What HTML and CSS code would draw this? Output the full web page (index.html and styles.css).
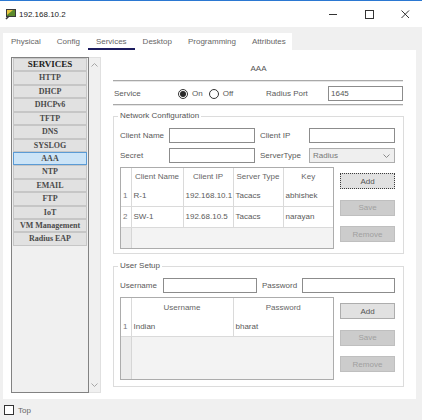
FILE: index.html
```html
<!DOCTYPE html>
<html>
   <head>
      <title>192.168.10.2</title>
      <meta name="viewport" content="width=device-width, initial-scale=1">
      <link rel="stylesheet" href="styles.css">
   </head>
   <body>
      <div class="titlebar">
         <svg class="app-icon" viewBox="0 0 12 12">
            <rect x="1.5" y="1.5" width="9" height="7" fill="#5c8a2c" stroke="#3a3a3a"/>
            <path d="M2 2h6l-6 5z" fill="#e9c640"/>
            <path d="M1 11l3-3" stroke="#3a3a3a" stroke-width="1.6"/>
         </svg>
         <span class="title">192.168.10.2</span>
         <div class="win-controls">
            <svg viewBox="0 0 10 10"><path d="M1 5.5h8" stroke="#333" stroke-width="1"/></svg>
            <svg viewBox="0 0 10 10"><rect x="1.5" y="1.5" width="8" height="8" fill="none" stroke="#333"/></svg>
            <svg viewBox="0 0 10 10"><path d="M1.5 1.5l7.5 7.5M9 1.5l-7.5 7.5" stroke="#333" stroke-width="1"/></svg>
         </div>
      </div>

      <div class="window-body">
         <div class="tabs">
            <span class="tab">Physical</span>
            <span class="tab">Config</span>
            <span class="tab active">Services</span>
            <span class="tab">Desktop</span>
            <span class="tab">Programming</span>
            <span class="tab">Attributes</span>
         </div>

         <div class="panel">
            <div class="side">
               <div class="service-list">
                  <div class="svc head">SERVICES</div>
                  <div class="svc">HTTP</div>
                  <div class="svc">DHCP</div>
                  <div class="svc">DHCPv6</div>
                  <div class="svc">TFTP</div>
                  <div class="svc">DNS</div>
                  <div class="svc">SYSLOG</div>
                  <div class="svc selected">AAA</div>
                  <div class="svc">NTP</div>
                  <div class="svc">EMAIL</div>
                  <div class="svc">FTP</div>
                  <div class="svc">IoT</div>
                  <div class="svc">VM Management</div>
                  <div class="svc">Radius EAP</div>
               </div>
               <div class="scrollbar">
                  <svg viewBox="0 0 7 4"><polyline points="0.5,3.5 3.5,0.5 6.5,3.5" fill="none" stroke="#a6a6a6"/></svg>
                  <svg viewBox="0 0 7 4"><polyline points="0.5,0.5 3.5,3.5 6.5,0.5" fill="none" stroke="#a6a6a6"/></svg>
               </div>
            </div>

            <div class="content">
               <div class="page-title">AAA</div>
               <div class="rule"></div>

               <div class="service-row">
                  <span class="row-label">Service</span>
                  <div class="radios">
                     <span class="radio on"></span><span class="radio-text">On</span>
                     <span class="radio"></span><span class="radio-text">Off</span>
                  </div>
                  <span class="port-label">Radius Port</span>
                  <div class="text-input port">1645</div>
               </div>
               <div class="rule second"></div>

               <fieldset class="group">
                  <legend>Network Configuration</legend>
                  <div class="form-grid net-grid">
                     <span>Client Name</span>
                     <div class="text-input"></div>
                     <span class="pad-label">Client IP</span>
                     <div class="text-input"></div>
                     <span>Secret</span>
                     <div class="text-input"></div>
                     <span class="pad-label">ServerType</span>
                     <div class="select">
                        <span>Radius</span>
                        <svg viewBox="0 0 7 4"><polyline points="0.5,0.5 3.5,3.5 6.5,0.5" fill="none" stroke="#8a8a8a"/></svg>
                     </div>
                  </div>

                  <div class="table-row">
                     <div class="grid-box net-table">
                        <table>
                           <colgroup>
                              <col style="width: 10px">
                              <col style="width: 52px">
                              <col style="width: 50px">
                              <col style="width: 50px">
                              <col>
                           </colgroup>
                           <tr class="head-row">
                              <th></th><th>Client Name</th><th>Client IP</th><th>Server Type</th><th>Key</th>
                           </tr>
                           <tr>
                              <td class="num">1</td><td>R-1</td><td>192.168.10.1</td><td>Tacacs</td><td>abhishek</td>
                           </tr>
                           <tr>
                              <td class="num">2</td><td>SW-1</td><td>192.68.10.5</td><td>Tacacs</td><td>narayan</td>
                           </tr>
                        </table>
                     </div>
                     <div class="btns">
                        <button class="btn focus">Add</button>
                        <button class="btn" disabled>Save</button>
                        <button class="btn" disabled>Remove</button>
                     </div>
                  </div>
               </fieldset>

               <fieldset class="group user-group">
                  <legend>User Setup</legend>
                  <div class="form-grid user-grid">
                     <span>Username</span>
                     <div class="text-input"></div>
                     <span class="pad-label">Password</span>
                     <div class="text-input"></div>
                  </div>

                  <div class="table-row">
                     <div class="grid-box user-table">
                        <table>
                           <colgroup>
                              <col style="width: 10px">
                              <col style="width: 102px">
                              <col>
                           </colgroup>
                           <tr class="head-row">
                              <th></th><th>Username</th><th>Password</th>
                           </tr>
                           <tr>
                              <td class="num">1</td><td>Indian</td><td>bharat</td>
                           </tr>
                        </table>
                     </div>
                     <div class="btns">
                        <button class="btn">Add</button>
                        <button class="btn" disabled>Save</button>
                        <button class="btn" disabled>Remove</button>
                     </div>
                  </div>
               </fieldset>
            </div>
         </div>
      </div>

      <div class="statusbar">
         <span class="check"></span>
         <span>Top</span>
      </div>
   </body>
</html>
```

FILE: styles.css
```css
* {
   box-sizing: border-box;
}

html, body {
   margin: 0;
}

body {
   width: 422px;
   height: 420px;
   overflow: hidden;
   background: #f0f0f0;
   font-family: "Liberation Sans", Arial, sans-serif;
   font-size: 8px;
   color: #5a5a5a;
}

/* window chrome */
.titlebar {
   height: 27px;
   background: #fff;
   border-top: 1px solid #2b78d2;
   display: flex;
   align-items: center;
   padding: 0 12px 0 5px;
}

.app-icon {
   width: 12px;
   height: 12px;
}

.title {
   margin-left: 2px;
   color: #222;
}

.win-controls {
   margin-left: auto;
   display: flex;
   gap: 26px;
}

.win-controls svg {
   width: 10px;
   height: 10px;
   display: block;
}

.window-body {
   padding: 6px 6px 0 3px;
}

.tabs {
   display: flex;
   width: 289px;
   height: 17px;
   background: #fff;
}

.tab {
   padding: 1px 8px 0;
   line-height: 15px;
   border-bottom: 2px solid transparent;
   color: #666;
}

.tab.active {
   border-bottom-color: #1c1c5e;
}

.panel {
   display: flex;
   gap: 12px;
   height: 349px;
   padding: 7px 12px 6px 8px;
   background: #fff;
}

/* services list */
.side {
   display: flex;
   width: 90px;
   flex-shrink: 0;
}

.service-list {
   width: 78px;
   border: 1px solid #828282;
   background: #f0f0f0;
   padding: 0 1px;
}

.svc {
   height: 13.43px;
   border: 1px solid #c6c6c6;
   background: #e1e1e1;
   text-align: center;
   font-family: "Liberation Serif", "Times New Roman", serif;
   font-weight: bold;
   font-size: 8px;
   line-height: 11.4px;
   color: #4a4a4a;
   white-space: nowrap;
}

.svc.head {
   font-size: 9px;
   color: #222;
}

.svc.selected {
   background: #cce4f7;
   border-color: #5b9bd5;
}

.scrollbar {
   width: 12px;
   border: 1px solid #e0e0e0;
   border-left: none;
   background: #f0f0f0;
   display: flex;
   flex-direction: column;
   justify-content: space-between;
   align-items: center;
   padding: 5px 0;
}

.scrollbar svg {
   width: 7px;
   height: 4px;
}

/* right side */
.content {
   width: 291px;
   flex-shrink: 0;
}

.page-title {
   margin-top: 5px;
   line-height: 14px;
   text-align: center;
   color: #555;
}

.rule {
   margin-top: 4px;
   width: 290px;
   border-top: 1px solid #a9a9a9;
   border-bottom: 1px solid #e6e6e6;
}

.rule.second {
   margin-top: 3px;
}

.service-row {
   margin-top: 4px;
   height: 15px;
   display: flex;
   align-items: center;
}

.row-label {
   width: 65px;
   padding-left: 1px;
}

.radios {
   width: 88px;
   display: flex;
   align-items: center;
}

.radio {
   width: 10px;
   height: 10px;
   border: 1px solid #333;
   border-radius: 50%;
   background: #fff;
   display: flex;
   align-items: center;
   justify-content: center;
}

.radio.on::after {
   content: "";
   width: 6px;
   height: 6px;
   border-radius: 50%;
   background: #2a2a2a;
}

.radio-text {
   margin: 0 6px 0 4px;
}

.port-label {
   width: 62px;
}

.text-input {
   height: 15px;
   border: 1px solid #8c8c8c;
   background: #fff;
   padding-left: 2px;
   line-height: 13px;
   color: #555;
}

.text-input.port {
   width: 75px;
}

.group {
   margin: 5px 0 0;
   padding: 7px 8px 4px 6px;
   border: 1px solid #dcdcdc;
   min-width: 0;
}

.group legend {
   padding: 0 2px;
   margin-left: -2px;
   line-height: 10px;
   color: #555;
}

.user-group {
   margin-top: 7px;
   padding-bottom: 6px;
}

.form-grid {
   display: grid;
   row-gap: 5px;
   align-items: center;
}

.net-grid {
   grid-template-columns: 49px 86px 54px 86px;
}

.user-grid {
   grid-template-columns: 43px 94px 45px 93px;
}

.pad-label {
   padding-left: 5px;
}

.select {
   height: 15px;
   border: 1px solid #adadad;
   background: #efefef;
   display: flex;
   align-items: center;
   justify-content: space-between;
   padding: 0 4px 0 3px;
   color: #777;
}

.select svg {
   width: 7px;
   height: 4px;
}

/* tables */
.table-row {
   display: flex;
   gap: 6px;
   margin-top: 4px;
}

.grid-box {
   width: 214px;
   border: 1px solid #acacac;
   background: linear-gradient(to right, #ececec 10px, #d6d6d6 10px, #d6d6d6 11px, #f3f3f3 11px);
   overflow: hidden;
}

.net-table {
   height: 82px;
}

.user-table {
   height: 83px;
}

table {
   width: 100%;
   border-collapse: collapse;
   table-layout: fixed;
}

th, td {
   background: #fff;
   border-right: 1px solid #dadada;
   border-bottom: 1px solid #dadada;
   padding: 0 2px;
   font-weight: normal;
   white-space: nowrap;
   overflow: hidden;
   color: #5a5a5a;
}

th {
   border-bottom: none;
   text-align: center;
   color: #666;
}

th:last-child, td:last-child {
   border-right: none;
}

td.num {
   color: #777;
}

.net-table .head-row {
   height: 17px;
}

.net-table td {
   height: 21px;
}

.user-table .head-row {
   height: 19px;
}

.user-table td {
   height: 19px;
}

.btns {
   width: 55px;
   display: flex;
   flex-direction: column;
   gap: 10.5px;
   padding-top: 6px;
}

.btn {
   height: 16px;
   padding: 0;
   border: 1px solid #adadad;
   background: #e1e1e1;
   font-family: inherit;
   font-size: 8px;
   color: #555;
}

.btn.focus {
   border: 1px dotted #3c3c3c;
}

.btn:disabled {
   background: #cccccc;
   border-color: #bfbfbf;
   color: #a0a0a0;
}

/* bottom bar */
.statusbar {
   height: 21px;
   display: flex;
   align-items: center;
   gap: 4px;
   padding: 1px 0 0 4px;
   color: #666;
}

.check {
   width: 10px;
   height: 10px;
   border: 1px solid #333;
   background: #fff;
}
```
